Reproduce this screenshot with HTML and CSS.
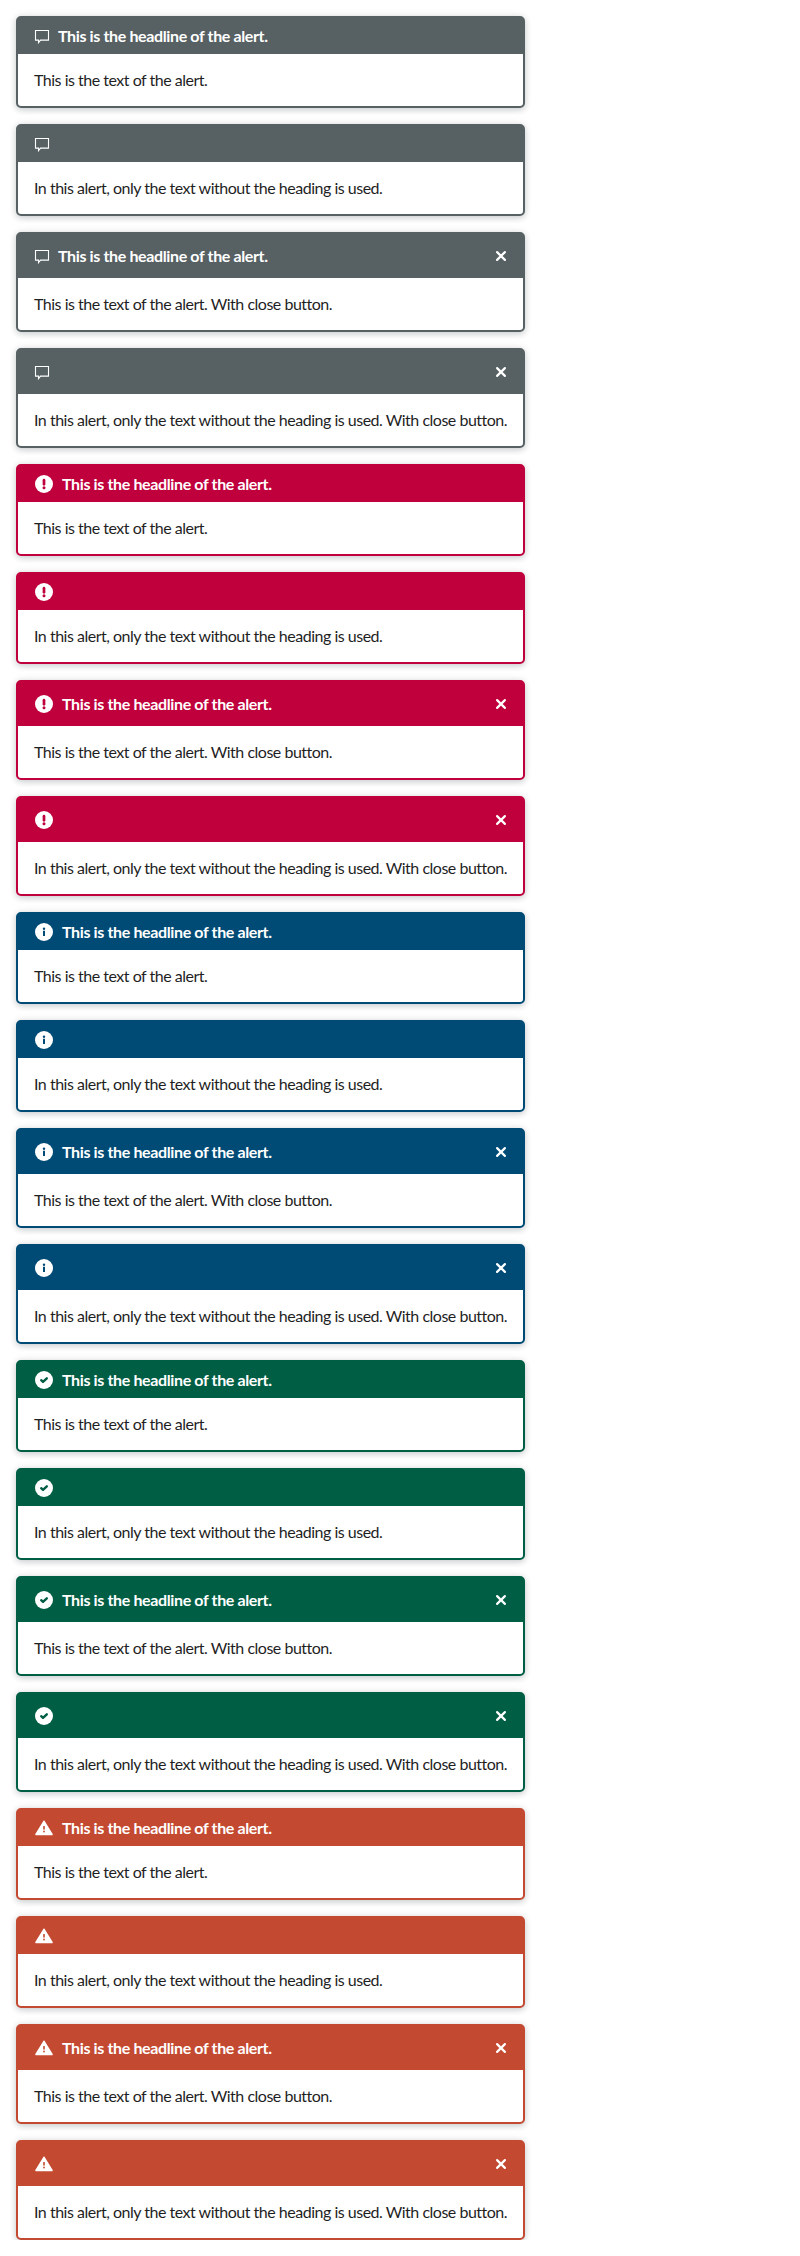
FILE: index.html
```html
<!DOCTYPE html>
<html lang="en">
<head>
<meta charset="utf-8">
<title>Alerts</title>
<link rel="stylesheet" href="styles.css">
</head>
<body>
<svg class="sprite" aria-hidden="true">
  <symbol id="i-default" viewBox="0 0 16 20"><path d="M1.5 4.5h13v9.6h-8l-2 2.5v-2.5h-3z" fill="none" stroke="#fff" stroke-width="1.1"/></symbol>
  <symbol id="i-error" viewBox="0 0 20 20"><circle cx="10" cy="10" r="9" fill="#fff"/><path d="M10 6.2v4.1" stroke="currentColor" stroke-width="2.7" stroke-linecap="round"/><circle cx="10" cy="13.8" r="1.5" fill="currentColor"/></symbol>
  <symbol id="i-info" viewBox="0 0 20 20"><circle cx="10" cy="10" r="9" fill="#fff"/><path d="M10 8.8v5.2" stroke="currentColor" stroke-width="2"/><circle cx="10" cy="6.7" r="1.2" fill="currentColor"/></symbol>
  <symbol id="i-success" viewBox="0 0 20 20"><circle cx="10" cy="10" r="9" fill="#fff"/><path d="M7.2 10.2l1.8 1.7 3.8-3.6" fill="none" stroke="currentColor" stroke-width="2.4" stroke-linecap="round" stroke-linejoin="round"/></symbol>
  <symbol id="i-warning" viewBox="0 0 20 20"><path d="M10 3.3L18 16.5H2z" fill="#fff" stroke="#fff" stroke-width="1.6" stroke-linejoin="round"/><path d="M10 8v3.6" stroke="currentColor" stroke-width="1.6"/><circle cx="10" cy="13.5" r=".9" fill="currentColor"/></symbol>
  <symbol id="i-close" viewBox="0 0 12 12"><path d="M2.1 2.1l7.8 7.8M9.9 2.1L2.1 9.9" stroke="#fff" stroke-width="2.2" stroke-linecap="round"/></symbol>
</svg>
<main class="alerts"></main>
<script src="alerts.js"></script>
</body>
</html>
```
FILE: styles.css
```css
* { box-sizing: border-box; }
body { margin: 0; background: #fff; color: #1f1f1f; font: 16px/24px Lato, "Noto Sans", sans-serif; }
.sprite { display: none; }
.alerts { display: flex; flex-direction: column; gap: 16px; width: 541px; padding: 16px 16px 0; }
.alert { border: 2px solid; border-radius: 5px; background: #fff; box-shadow: 0 2px 6px rgba(0, 20, 35, .18), 0 0 10px rgba(0, 20, 35, .07); }
.default { color: #576164; }
.error { color: #c0003c; }
.info { color: #004b76; }
.success { color: #005e45; }
.warning { color: #c44931; }
.head { display: flex; align-items: center; gap: 8px; height: 36px; padding: 0 16px; background: currentColor; }
.closable .head { height: 44px; }
.icon { width: 20px; height: 20px; flex: none; }
.default .icon { width: 16px; }
.title { color: #fff; font-weight: 700; letter-spacing: -.37px; white-space: nowrap; }
.close { display: flex; margin-left: auto; padding: 0; border: 0; background: none; color: inherit; }
.x { width: 12px; height: 12px; }
.text { margin: 0; padding: 14px 16px; color: #1f1f1f; letter-spacing: -.49px; white-space: nowrap; }
```
FILE: alerts.js
```js
const list = document.querySelector('.alerts');
for (const type of ['default', 'error', 'info', 'success', 'warning']) {
  for (const closable of [false, true]) {
    for (const titled of [true, false]) {
      const text = (titled ? 'This is the text of the alert.' : 'In this alert, only the text without the heading is used.')
        + (closable ? ' With close button.' : '');
      list.insertAdjacentHTML('beforeend', `
        <section class="alert ${type}${closable ? ' closable' : ''}">
          <div class="head">
            <svg class="icon"><use href="#i-${type}"/></svg>
            ${titled ? '<span class="title">This is the headline of the alert.</span>' : ''}
            ${closable ? '<button class="close" aria-label="Close"><svg class="x"><use href="#i-close"/></svg></button>' : ''}
          </div>
          <p class="text">${text}</p>
        </section>`);
    }
  }
}
```
